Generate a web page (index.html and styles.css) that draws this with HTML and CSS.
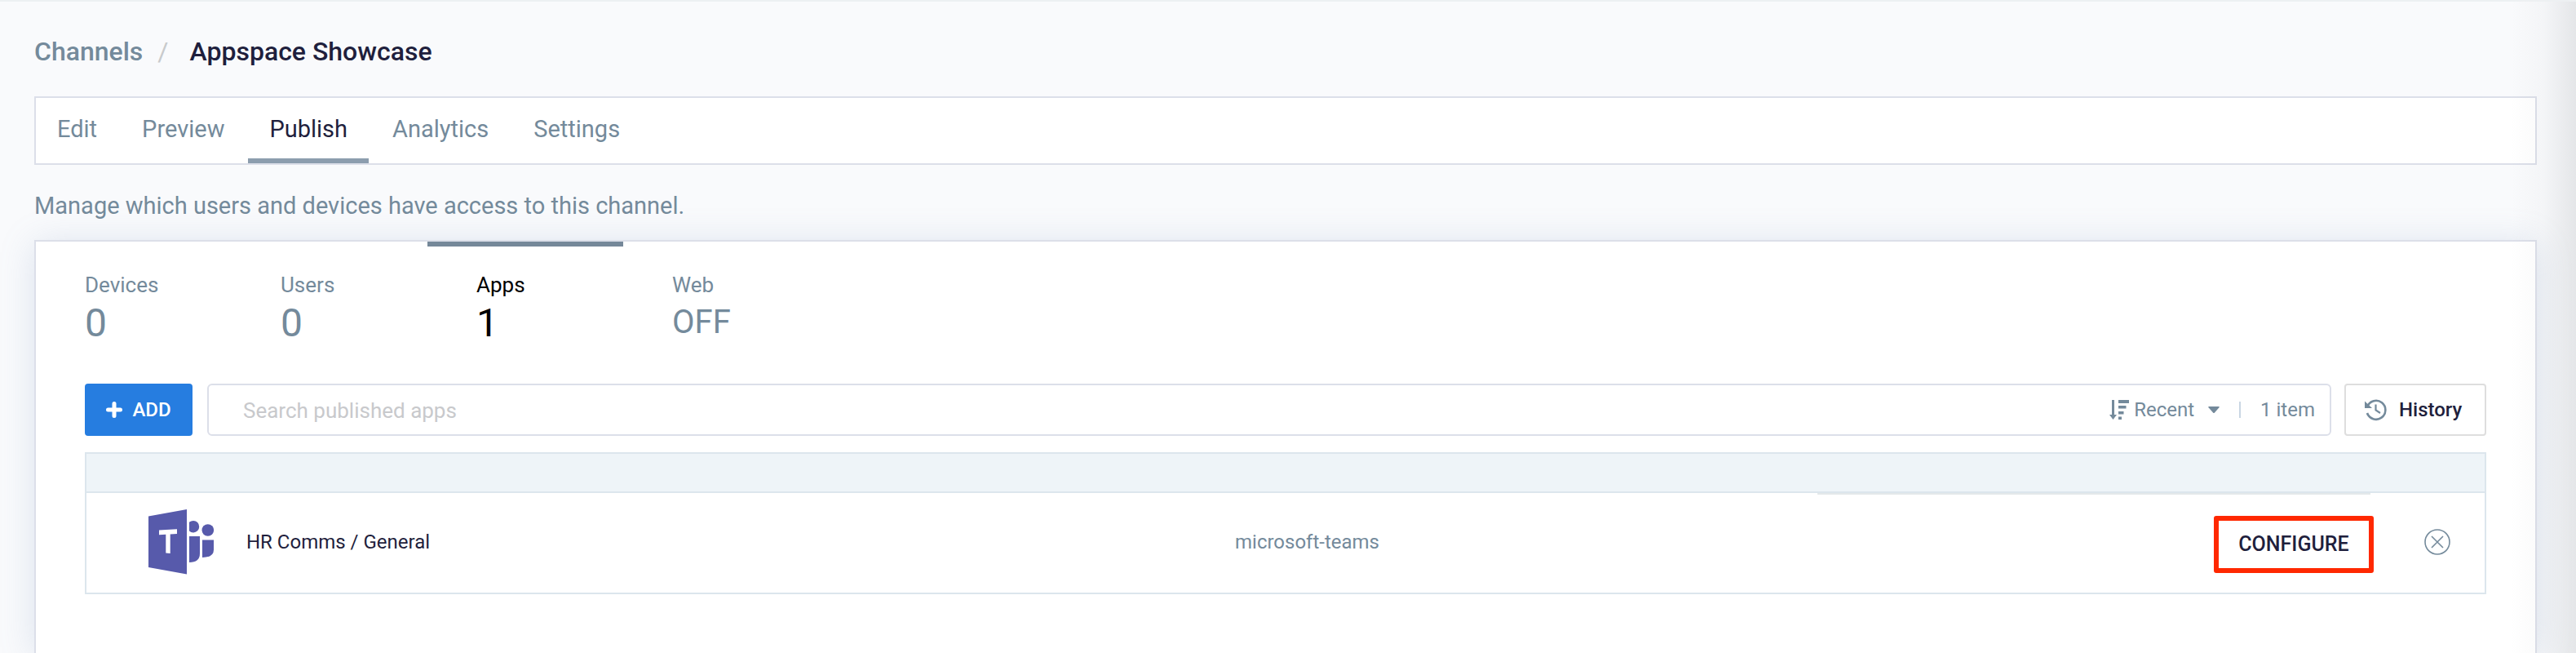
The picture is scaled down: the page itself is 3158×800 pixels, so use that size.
FILE: index.html
```html
<!DOCTYPE html>
<html lang="en">
<head>
<meta charset="utf-8">
<title>Appspace Showcase</title>
<link rel="stylesheet" href="styles.css">
</head>
<body>
<main class="page">
  <nav class="breadcrumb">
    <a class="crumb" href="#">Channels</a>
    <span class="slash">/</span>
    <h1 class="current">Appspace Showcase</h1>
  </nav>

  <nav class="tabs">
    <a class="tab" href="#">Edit</a>
    <a class="tab" href="#">Preview</a>
    <a class="tab active" href="#">Publish</a>
    <a class="tab" href="#">Analytics</a>
    <a class="tab" href="#">Settings</a>
  </nav>

  <p class="intro">Manage which users and devices have access to this channel.</p>

  <section class="card">
    <nav class="stats">
      <a class="stat" href="#"><span class="label">Devices</span><span class="value">0</span></a>
      <a class="stat" href="#"><span class="label">Users</span><span class="value">0</span></a>
      <a class="stat active" href="#"><span class="label">Apps</span><span class="value">1</span></a>
      <a class="stat" href="#"><span class="label">Web</span><span class="value state">OFF</span></a>
    </nav>

    <div class="toolbar">
      <button class="add" type="button">
        <svg class="plus" viewBox="0 0 20 20"><path d="M10 2.500v15M2.500 10h15" stroke="currentColor" stroke-width="5" stroke-linecap="round"/></svg>
        ADD
      </button>
      <div class="search">
        <input class="query" type="text" placeholder="Search published apps" aria-label="Search published apps">
        <button class="sort" type="button">
          <svg class="sort-icon" viewBox="0 0 24 24" fill="currentColor"><path d="M3 0h3v18h3l-4.500 6L0 18h3zM11 0h13v4H11zM11 7h9.500v3.500H11zM11 14h6.500v3.500H11zM11 20.500h4V24h-4z"/></svg>
          Recent
          <svg class="caret" viewBox="0 0 14 8" fill="currentColor"><path d="M1 0h12q1.500 0 .5 1.200L8 7.400q-1 1-2 0L.5 1.200Q-.5 0 1 0z"/></svg>
        </button>
        <span class="divider"></span>
        <span class="count">1 item</span>
      </div>
      <button class="history" type="button">
        <svg class="history-icon" viewBox="0 0 28 28" fill="none" stroke="currentColor"><path d="M4.200 10A11.500 11.500 0 1 1 4 18" stroke-width="2.600"/><path d="M1 3.500V12h9z" fill="currentColor" stroke="none"/><path d="M14.500 7.500v7l5.500 3.500" stroke-width="2.200"/></svg>
        History
      </button>
    </div>

    <table class="apps">
      <thead>
        <tr><td class="c-name"></td><td class="c-type"></td><td class="c-action"></td><td class="c-remove"></td></tr>
      </thead>
      <tbody>
        <tr>
          <td>
            <div class="app">
              <svg class="teams" viewBox="0 0 80 80" fill="#575aab">
                <path d="M0 8.500 47 0v79.500L0 71z"/>
                <path d="M50 15.800a7.300 7.300 0 1 1 0 10.800zM50 33h13v21q0 11-13 11zM66 37.500h14v12q0 9.500-14 9.500z"/>
                <circle cx="72.800" cy="25.500" r="7.300"/>
                <path fill="#fff" d="M13 25.500 35 24.300V30l-8.300.4V54L21.300 53.500V30.800L13 31.200z"/>
              </svg>
              HR Comms / General
            </div>
          </td>
          <td class="type">microsoft-teams</td>
          <td class="action"><button class="configure" type="button">CONFIGURE</button></td>
          <td class="remove-cell">
            <button class="remove" type="button" aria-label="Remove">
              <svg viewBox="0 0 32 32" fill="none" stroke="currentColor" stroke-width="1.600"><circle cx="16" cy="16" r="15"/><path d="M9 9l14 14M23 9L9 23"/></svg>
            </button>
          </td>
        </tr>
      </tbody>
    </table>
  </section>
</main>
</body>
</html>
```
FILE: styles.css
```css
* { box-sizing: border-box; }

html, body { height: 100%; }

body {
  margin: 0;
  overflow: hidden;
  background: #f9fafc;
  color: #748a9b;
  font: 24px/32px Roboto, sans-serif;
}

a { color: inherit; text-decoration: none; }

button {
  margin: 0;
  padding: 0;
  border: 0;
  background: none;
  color: inherit;
  font: inherit;
  cursor: pointer;
}

svg { display: block; flex: none; }

.page {
  position: relative;
  display: flex;
  flex-direction: column;
  min-height: 100%;
  padding: 42px 48px 0 42px;
  border-top: 2px solid #edf0f2;
}

/* soft shade along the right window edge */
.page::after {
  content: "";
  position: absolute;
  top: 0;
  right: 0;
  bottom: 0;
  width: 80px;
  background: linear-gradient(to right, rgba(90, 95, 100, 0), rgba(90, 95, 100, .03) 50%, rgba(90, 95, 100, .13));
  pointer-events: none;
}

.breadcrumb {
  display: flex;
  align-items: center;
  margin-bottom: 36px;
  font-size: 32px;
  line-height: 38px;
  font-weight: 500;
}

.slash {
  margin: 0 26px 0 18px;
  color: #c8cacc;
  font-weight: 400;
}

.current {
  margin: 0;
  color: #1f1f3d;
  font: inherit;
}

.tabs {
  display: flex;
  gap: 3px;
  height: 84px;
  border: 2px solid #dcdfe9;
  background: #fff;
  font-size: 29px;
}

.tab {
  padding: 22px 26px 20px;
  border-bottom: 6px solid transparent;
}

.tab.active { border-color: #8c9dae; color: #1f1f3d; }

.intro {
  margin: 34px 0 26px;
  font-size: 29px;
}

.card {
  flex: 1;
  padding: 0 60px;
  border: 2px solid #dcdfe9;
  border-bottom: 0;
  background: #fff;
  box-shadow: 0 4px 40px rgba(120, 145, 185, .22);
}

.stats { display: flex; }

.stat {
  display: flex;
  flex-direction: column;
  width: 240px;
  height: 174px;
  padding-top: 37px;
  position: relative;
}

.stat.active { color: #000; }

.stat.active::before {
  content: "";
  position: absolute;
  top: 0;
  left: -60px;
  right: 60px;
  height: 6px;
  background: #758899;
}

.label { font-size: 26px; }

.value {
  font-size: 48px;
  line-height: 62px;
}

.value.state { font-size: 40px; line-height: 60px; }

.toolbar {
  display: flex;
  height: 64px;
  margin-bottom: 20px;
}

.add {
  display: flex;
  align-items: center;
  justify-content: center;
  gap: 12px;
  width: 132px;
  border-radius: 4px;
  background: #267de0;
  color: #fff;
  font-weight: 500;
}

.plus { width: 20px; height: 20px; }

.search {
  display: flex;
  flex: 1;
  align-items: center;
  margin: 0 16px 0 18px;
  padding: 0 18px 0 42px;
  border: 2px solid #dcdfe9;
  border-radius: 6px;
}

.query {
  flex: 1;
  min-width: 0;
  padding: 2px 0 0;
  border: 0;
  outline: 0;
  background: none;
  color: #1f1f3d;
  font: inherit;
  font-size: 26px;
}

.query::placeholder { color: #c8c9cc; opacity: 1; }

.sort { display: flex; align-items: center; gap: 6px; }

.sort-icon { width: 24px; height: 24px; }

.caret { width: 14px; height: 8px; margin-left: 11px; }

.divider {
  width: 2px;
  height: 20px;
  margin: 0 24px;
  background: #c9d6e3;
}

.history {
  display: flex;
  align-items: center;
  gap: 15px;
  width: 174px;
  padding-left: 22px;
  border: 2px solid #dedede;
  border-radius: 4px;
  color: #1f1f3d;
  font-weight: 500;
}

.history-icon { width: 28px; height: 28px; color: #748a9b; }

.apps {
  width: 100%;
  border: 2px solid #dce6ed;
  border-spacing: 0;
  table-layout: fixed;
}

.apps td { padding: 0; }

.apps thead td {
  height: 48px;
  border-bottom: 2px solid #dce6ed;
  background: #eef4f8;
}

.apps tbody td { height: 122px; padding-bottom: 2px; }

.c-name { width: 1408px; }
.c-action { width: 678px; }
.c-remove { width: 140px; }

.app {
  display: flex;
  align-items: center;
  gap: 40px;
  padding-left: 76px;
  color: #1f1f3d;
}

.teams { width: 80px; height: 80px; }

.action {
  box-shadow: inset 0 2px #e4e8ea;
  text-align: right;
}

.configure {
  width: 196px;
  height: 70px;
  margin: 6px -4px 0 0;
  border: 6px solid #ff2800;
  border-radius: 3px;
  color: #1f1f3d;
  font-size: 25px;
  font-weight: 500;
}

.remove {
  display: block;
  width: 32px;
  height: 32px;
  margin-left: 66px;
}
```
